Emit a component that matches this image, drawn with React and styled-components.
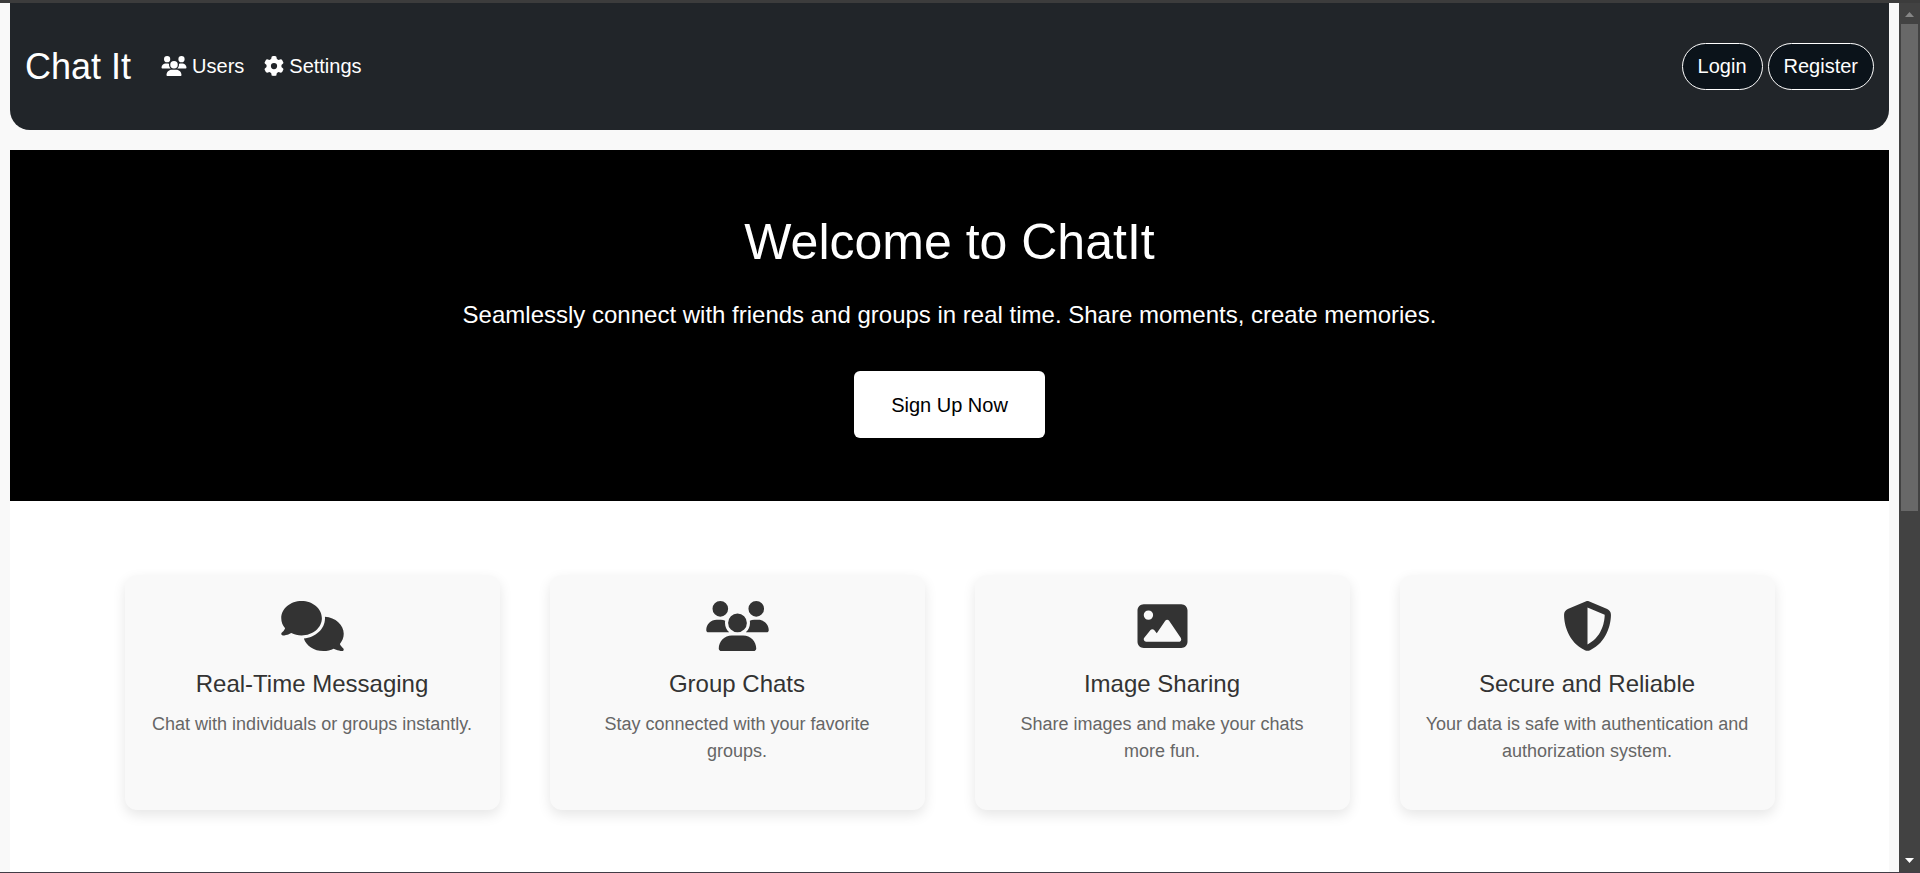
import React from "react";
import styled, { createGlobalStyle } from "styled-components";
import {
  FaComments,
  FaGear,
  FaImage,
  FaShieldHalved,
  FaUsers,
} from "react-icons/fa6";

const GlobalStyle = createGlobalStyle`
  *, *::before, *::after { box-sizing: border-box; }
  body {
    margin: 0;
    background: #f9f9f9;
    color: #333;
    font-family: Arial, "Liberation Sans", sans-serif;
    font-size: 20px;
    line-height: 30px;
  }
`;

const Shell = styled.div`
  display: flex;
  min-height: 100vh;
  border-top: 3px solid #3c3c3c;
  border-bottom: 1px solid #423c46;
`;

const Page = styled.div`
  flex: 1;
  min-width: 0;
  display: flex;
  flex-direction: column;
  padding: 0 10px;
`;

const Header = styled.header`
  display: flex;
  flex-wrap: wrap;
  align-items: center;
  gap: 20px;
  padding: 40px 15px;
  margin-bottom: 20px;
  background: #212529;
  border-radius: 0 0 20px 20px;
`;

const Brand = styled.a`
  color: #fff;
  font-size: 36px;
  line-height: 46px;
  text-decoration: none;
`;

const Nav = styled.nav`
  display: flex;
  flex: 1;
  padding-bottom: 2px;
`;

const NavLink = styled.a`
  display: flex;
  align-items: center;
  gap: 5px;
  padding: 0 10px;
  color: #fff;
  text-decoration: none;

  svg {
    width: ${(p) => (p.$wideIcon ? "26px" : "20px")};
    height: 20px;
  }
`;

const Actions = styled.div`
  display: flex;
  gap: 5px;
`;

const PillButton = styled.button`
  padding: 7px 15px 8px;
  color: #fff;
  background: #0b131a;
  border: 1px solid #fff;
  border-radius: 25px;
  font: inherit;
  cursor: pointer;
`;

const Hero = styled.section`
  display: flex;
  flex-direction: column;
  align-items: center;
  padding: 62px 20px 63px;
  background: #000;
  color: #fff;
  text-align: center;
`;

const HeroTitle = styled.h1`
  margin: 0 0 25px;
  font-size: 50px;
  font-weight: 400;
  line-height: 60px;
`;

const HeroText = styled.p`
  margin: 0 0 38px;
  font-size: 24px;
  line-height: 36px;
`;

const SignUpButton = styled.button`
  padding: 19px 37px 18px;
  color: #000;
  background: #fff;
  border: 0;
  border-radius: 6px;
  font: inherit;
  cursor: pointer;
`;

const Features = styled.section`
  flex: 1;
  padding: 74px 20px 61px;
  background: #fff;
`;

const FeatureGrid = styled.div`
  display: grid;
  grid-template-columns: repeat(4, minmax(0, 1fr));
  gap: 50px;
  max-width: 1650px;
  margin: 0 auto;

  @media (max-width: 1300px) {
    grid-template-columns: repeat(2, minmax(0, 1fr));
  }

  @media (max-width: 700px) {
    grid-template-columns: minmax(0, 1fr);
  }
`;

const Card = styled.article`
  display: flex;
  flex-direction: column;
  align-items: center;
  padding: 26px 25px 45px;
  background: #f9f9f9;
  border-radius: 12px;
  box-shadow: 0 5px 13px rgba(0, 0, 0, 0.1);
  text-align: center;

  svg {
    width: 63px;
    height: 50px;
  }
`;

const CardTitle = styled.h3`
  margin: 18px 0 13px;
  font-size: 24px;
  font-weight: 400;
  line-height: 29px;
`;

const CardText = styled.p`
  margin: 0;
  color: #666;
  font-size: 18px;
  line-height: 27px;
`;

const Scrollbar = styled.div`
  position: sticky;
  top: 0;
  display: flex;
  flex-direction: column;
  align-items: center;
  flex: 0 0 21px;
  max-height: 100vh;
  background: #424242;
`;

const ScrollArrow = styled.svg`
  width: 9px;
  height: 5px;
  margin: ${(p) => (p.$down ? "auto 0 9px" : "9px 0 7px")};
  fill: ${(p) => (p.$down ? "#fff" : "#868686")};
`;

const Thumb = styled.div`
  width: 17px;
  height: 56%;
  background: #686868;
`;

const features = [
  {
    Icon: FaComments,
    title: "Real-Time Messaging",
    text: "Chat with individuals or groups instantly.",
  },
  {
    Icon: FaUsers,
    title: "Group Chats",
    text: "Stay connected with your favorite groups.",
  },
  {
    Icon: FaImage,
    title: "Image Sharing",
    text: "Share images and make your chats more fun.",
  },
  {
    Icon: FaShieldHalved,
    title: "Secure and Reliable",
    text: "Your data is safe with authentication and authorization system.",
  },
];

export default function App() {
  return (
    <>
      <GlobalStyle />
      <Shell>
        <Page>
          <Header>
            <Brand href="#home">Chat It</Brand>
            <Nav>
              <NavLink href="#users" $wideIcon>
                <FaUsers aria-hidden="true" />
                Users
              </NavLink>
              <NavLink href="#settings">
                <FaGear aria-hidden="true" />
                Settings
              </NavLink>
            </Nav>
            <Actions>
              <PillButton type="button">Login</PillButton>
              <PillButton type="button">Register</PillButton>
            </Actions>
          </Header>
          <Hero>
            <HeroTitle>Welcome to ChatIt</HeroTitle>
            <HeroText>
              Seamlessly connect with friends and groups in real time. Share
              moments, create memories.
            </HeroText>
            <SignUpButton type="button">Sign Up Now</SignUpButton>
          </Hero>
          <Features>
            <FeatureGrid>
              {features.map(({ Icon, title, text }) => (
                <Card key={title}>
                  <Icon aria-hidden="true" />
                  <CardTitle>{title}</CardTitle>
                  <CardText>{text}</CardText>
                </Card>
              ))}
            </FeatureGrid>
          </Features>
        </Page>
        <Scrollbar aria-hidden="true">
          <ScrollArrow viewBox="0 0 9 5">
            <path d="M4.5 0 9 5H0z" />
          </ScrollArrow>
          <Thumb />
          <ScrollArrow $down viewBox="0 0 9 5">
            <path d="M0 0h9L4.5 5z" />
          </ScrollArrow>
        </Scrollbar>
      </Shell>
    </>
  );
}
